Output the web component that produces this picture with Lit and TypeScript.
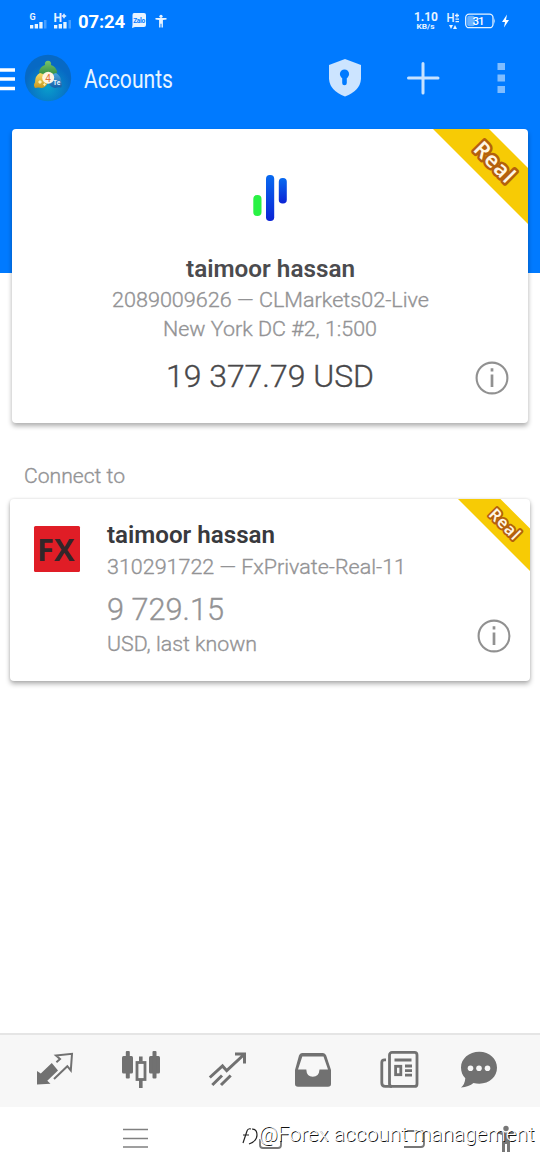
import { LitElement, html, css, svg } from "lit";
import { customElement, property } from "lit/decorators.js";

@customElement("info-icon")
class InfoIcon extends LitElement {
  static styles = css`:host{display:block;width:34px;height:34px}svg{display:block}`;
  render() {
    return html`<svg width="34" height="34" viewBox="0 0 34 34"><circle cx="17" cy="17" r="15.4" fill="none" stroke="#919191" stroke-width="2.1"/><path d="M17 13.5V26M17 7.300V10.500" stroke="#919191" stroke-width="2.700"/></svg>`;
  }
}

@customElement("real-ribbon")
class RealRibbon extends LitElement {
  @property({ type: Number }) size = 95;
  static styles = css`:host{display:block}svg{display:block}text{font-family:"Noto Sans",sans-serif;font-weight:600;font-size:21.5px}`;
  render() {
    return html`<svg width=${this.size} height=${this.size} viewBox="0 0 95 95"><path d="M0 0H56L95 39V95Z" fill="#f7cb05"/><text transform="translate(61.5 33) rotate(45)" x="0" y="7.5" text-anchor="middle" textLength="48" fill="#fff6e4" stroke="#b4600c" stroke-width="5" stroke-linejoin="round" paint-order="stroke">Real</text></svg>`;
  }
}

const fit = (text: string, width: number, size: number, h: number, cls: string, middle = false) => html`
  <svg class="line ${cls}" width=${width} height=${h}><text x=${middle ? width / 2 : 0} y=${Math.round(h * 0.76)} text-anchor=${middle ? "middle" : "start"} font-size=${size} textLength=${width} lengthAdjust="spacingAndGlyphs">${text}</text></svg>`;

const tabs = [
  svg`<path d="M1 20v13.6l13.5-.8-3.2-3L22 19.5 15.8 12 4.8 22.6Z" fill="#717171"/><path d="M18 28 31.3 15.2 34.8 19.5 36 2.8 20 4.5 24 8 20.4 11.2" fill="none" stroke="#717171" stroke-width="2"/>`,
  svg`<g fill="#717171"><rect x="0" y="5" width="11" height="17.5" rx="1.5"/><rect x="3.8" y="0" width="4" height="27.5" rx="1"/><rect x="27" y="5" width="11" height="17.5" rx="1.5"/><rect x="30.5" y="0" width="4" height="27.5" rx="1"/><rect x="17" y="5.5" width="3.6" height="5"/><rect x="17" y="28" width="3.6" height="9"/></g><rect x="15" y="11.5" width="8" height="17" fill="#f7f7f7" stroke="#717171" stroke-width="2.8"/>`,
  svg`<g fill="none" stroke="#717171" stroke-width="3"><path d="M1.800 26.500 14.500 15l4.200 4.700L35.500 4M27 3h9.500v9.500"/><path d="M4.300 34 14 24.500M13 34l9.700-9.500"/></g>`,
  svg`<path fill="#717171" fill-rule="evenodd" d="M8 2H29q2.300 0 3.200 2.500L37 19v14q0 2.700-3 2.700H4q-3 0-3-2.700V19L5 4.500Q5.800 2 8 2ZM8.300 5.500 4 18.500h8.300q.3 7.300 6.500 7.300t6.700-7.300H34L29.500 5.500Z"/>`,
  svg`<g fill="none" stroke="#717171" stroke-width="2.8"><rect x="9.5" y="1.4" width="27.5" height="34" rx="2.5"/><path d="M6 8.800H4.500Q1.800 8.800 1.800 11.500V32q0 3.400 3.400 3.400H12"/><path d="M14.500 9h17M25 15h7M25 19.700h7M25 24.200h7"/><rect x="15.6" y="15.3" width="5.2" height="8.4"/></g>`,
  svg`<g transform="translate(-6)"><path fill="#717171" d="M19.300.7C9 .7 1 7.700 1 16.400c0 4.300 1.500 7.800 4.300 10.800Q5 33 1 36.600q8-.8 12.500-4.700 2.700.8 5.800.8C29.500 32.700 37 25.700 37 16.800 37 7.700 29.500.7 19.300.7Z"/><g fill="#f7f7f7"><circle cx="10.5" cy="17.2" r="2.8"/><circle cx="19" cy="17.2" r="2.8"/><circle cx="27.5" cy="17.2" r="2.8"/></g></g>`,
];

@customElement("app-root")
class AppRoot extends LitElement {
  static styles = css`
    :host{display:block;height:1170px;position:relative;overflow:hidden;background:#fff;font-family:Roboto,sans-serif;box-sizing:border-box}
    *{box-sizing:border-box}
    svg{display:block;overflow:visible;flex:none}
    .page{display:flex;flex-direction:column;height:1170px;background:linear-gradient(#007aff 0 273px,#fff 273px)}
    .status{height:42px;flex:none}
    .bar{height:87px;flex:none}
    .card{background:#fff;border-radius:4px;position:relative;flex:none}
    .main{height:294px;margin:0 12px;padding:46px 0 0;display:flex;flex-direction:column;align-items:center;box-shadow:0 3px 5px rgba(0,0,0,.32)}
    .ribbon{position:absolute;top:0;right:0}
    .info{position:absolute;right:19px;bottom:28px}
    .line text{font-family:Roboto,sans-serif}
    .name{fill:#4b4b4e;font-weight:600}
    .dark{fill:#38393d;font-weight:600}
    .grey{fill:#939395;stroke:#939395;stroke-width:.35px;font-weight:300}
    .amount{fill:#48484a;stroke:#48484a;stroke-width:.35px;font-weight:300}
    .main .name{margin-top:35px}
    .main .name + .grey{margin-top:3px}
    .main .grey + .grey{margin-top:2px}
    .main .amount{margin-top:16px}
    .connect{margin:39px 0 9px 24px}
    .second{height:182px;margin:0 10px;padding:20px 24px;display:flex;gap:27px;box-shadow:0 3px 5px rgba(0,0,0,.3),0 0 3px rgba(0,0,0,.12)}
    .fx{margin-top:7px}
    .details{display:flex;flex-direction:column}
    .details .last{margin-top:-2px}
    .space{flex:1}
    .tabs{height:74px;flex:none;background:#f7f7f7;border-top:2px solid #e5e5e5;display:flex;gap:48px;padding:16px 0 0 36px}
    .nav{height:63px;flex:none;background:#fff}
    .b{font-weight:700}
  `;
  render() {
    return html`<div class="page">
      <svg class="status" width="540" height="42" fill="#e8f4ff" font-family="Roboto">
        <text x="29.500" y="20" font-size="9" class="b">G</text>
        <path d="M30 25h3.300v3.500H30zM34.700 24h3.300v4.500h-3.300zM39.300 22h3.300v6.500h-3.300z"/><path d="M44 20h2.500v8.500H44z" opacity=".3"/>
        <text x="53.500" y="22" font-size="12" class="b">H</text><path d="M61.800 16h4.400M64 13.800v4.400" stroke="#e8f4ff" stroke-width="1.500"/>
        <path d="M54 25h3.300v3.500H54zM58.700 24h3.300v4.500h-3.300zM63.300 22h3.300v6.500h-3.300z"/><path d="M68.500 20h2.500v8.500h-2.500z" opacity=".3"/>
        <text x="78" y="28" font-size="18.500" class="b" fill="#fff" textLength="47">07:24</text>
        <path d="M134 13h10q2 0 2 2v10q0 2-2 2h-9l-3 1 .5-3V15q0-2 1.500-2Z"/><text x="133.200" y="23" font-size="6.500" class="b" fill="#007aff" textLength="12">Zalo</text>
        <circle cx="161" cy="16.300" r="1.600"/><path d="M155.500 18h11v1.500l-3.600.6V27.500h-1.400V23.700h-1V27.500h-1.400V20.100l-3.600-.6Z"/>
        <text x="414" y="21" font-size="12" class="b" textLength="24">1.10</text>
        <text x="416.500" y="29" font-size="7.500" class="b" textLength="18" lengthAdjust="spacingAndGlyphs">KB/s</text>
        <text x="446.500" y="22.200" font-size="13" font-weight="500" textLength="8" lengthAdjust="spacingAndGlyphs">H</text>
        <path d="M455 15.500h4M457 13.500v4M455.500 19.200h3.500M455.500 21.700h3.500" stroke="#e8f4ff" stroke-width="1.300"/>
        <path d="M449 25h4l-2 4zM453 29h4l-2-4z"/>
        <rect x="465.700" y="14.200" width="27.300" height="13.500" rx="3.500" fill="none" stroke="#e8f4ff" stroke-width="1.300"/><rect x="467.200" y="15.700" width="7.500" height="10.500" rx="2" opacity=".45"/><path d="M494 18q1.500 3 0 6z"/>
        <text x="472.500" y="25" font-size="11.500" font-weight="500" fill="#fff" textLength="12">31</text>
        <path d="M507 14.500 502 22h3l-1 5.500 5-7.500h-3Z" fill="#fff"/>
      </svg>
      <svg class="bar" width="540" height="87" viewBox="0 42 540 87">
        <defs>
          <radialGradient id="g" cy=".7"><stop stop-color="#0a9fcb"/><stop offset="1" stop-color="#0769c4"/></radialGradient>
          <linearGradient id="gg" x2="0" y2="1"><stop stop-color="#78c46a"/><stop offset="1" stop-color="#1f7f3a"/></linearGradient>
          <linearGradient id="gy" x2="0" y2="1"><stop stop-color="#f4dc6a"/><stop offset="1" stop-color="#c9981f"/></linearGradient>
          <linearGradient id="gb" x2="0" y2="1"><stop stop-color="#4ea6dc"/><stop offset="1" stop-color="#145fa8"/></linearGradient>
        </defs>
        <path d="M0 70H15M0 79H15M0 88.500H15" stroke="#fff" stroke-width="3.400"/>
        <circle cx="48" cy="78" r="23.200" fill="url(#g)"/>
        <path d="M45 65a3.200 3.200 0 1 1 6 0q5 1.500 6 7-1 7-9 7-8 0-9-7 1-5.500 6-7Z" fill="url(#gg)"/>
        <path d="M40 73q5 1 8 6 0 8-6 9-4-1-7 0-2-3 0-5.500 0-7 5-9.500Z" fill="url(#gy)"/>
        <path d="M56 73q5 3 5.500 9 1.500 3-.5 5.500-3-.5-6 .5-7-1-7-9 3-5 8-6Z" fill="url(#gb)"/>
        <circle cx="48.200" cy="77.800" r="6" fill="#fff4e2"/>
        <text x="48.100" y="81.500" font-size="10" text-anchor="middle" font-family="Roboto" fill="#e2713b">4</text>
        <text x="53" y="85" font-size="6.500" font-family="Roboto" class="b" fill="#e4f4ff">Te</text><path d="M38 82l2-2 2 2-2 2zM43 84.500l1.500-1.500 1.500 1.500-1.500 1.500z" fill="#fff3b0"/>
        <text x="84" y="88" font-size="25" font-family="Roboto" fill="#e8f4ff" textLength="89" lengthAdjust="spacingAndGlyphs">Accounts</text>
        <path d="M345 59 361 65V79Q360 91 345 96.500 330 91 329 79V65Z" fill="#cce4ff"/><circle cx="344.500" cy="74" r="4.600" fill="#007aff"/><path d="M344.500 75v8" stroke="#007aff" stroke-width="4.600" stroke-linecap="round"/>
        <path d="M408.500 78H438M423 63.500V93" stroke="#c7e2ff" stroke-width="3" stroke-linecap="round"/>
        <path d="M497.500 63h7.500v7h-7.500zM497.500 74.500h7.500v7h-7.500zM497.500 86h7.500v7h-7.500z" fill="#80bdff"/>
      </svg>
      <section class="card main">
        <svg width="40" height="46" viewBox="250 175 40 46"><defs><linearGradient id="bl" x2="0" y2="1"><stop stop-color="#086af0"/><stop offset="1" stop-color="#0b23d5"/></linearGradient></defs><rect x="253.300" y="195" width="8.200" height="21" rx="4" fill="#29f244"/><rect x="266" y="175" width="8.200" height="46" rx="3.800" fill="url(#bl)"/><rect x="278.800" y="178" width="8" height="25.500" rx="3.800" fill="url(#bl)"/></svg>
        ${fit("taimoor hassan", 169, 23.4, 27, "name", true)}
        ${fit("2089009626 — CLMarkets02-Live", 317, 21, 27, "grey", true)}
        ${fit("New York DC #2, 1:500", 214, 21, 27, "grey", true)}
        ${fit("19 377.79 USD", 208, 31.5, 38, "amount", true)}
        <real-ribbon class="ribbon" .size=${95}></real-ribbon><info-icon class="info"></info-icon>
      </section>
      <div class="connect">${fit("Connect to", 101, 21, 28, "grey")}</div>
      <section class="card second">
        <svg class="fx" width="46" height="46"><rect width="46" height="46" rx="1.500" fill="#e01d26"/><text x="3" y="34.500" font-family="Open Sans" font-size="31" class="b" fill="#322629" textLength="37.500" lengthAdjust="spacingAndGlyphs">FX</text></svg>
        <div class="details">
          ${fit("taimoor hassan", 168, 23.4, 31, "dark")}
          ${fit("310291722 — FxPrivate-Real-11", 299, 21, 32, "grey")}
          ${fit("9 729.15", 117, 31.5, 50, "grey")}
          ${fit("USD, last known", 150, 21, 27, "grey last")}
        </div>
        <real-ribbon class="ribbon" .size=${72}></real-ribbon><info-icon class="info"></info-icon>
      </section>
      <div class="space"></div>
      <nav class="tabs">${tabs.map((t) => html`<svg width="38" height="38">${t}</svg>`)}</nav>
      <svg class="nav" width="540" height="63" viewBox="0 1107 540 63">
        <path d="M123 1129.500H148M123 1138.500H148M123 1147H148" stroke="#808080" stroke-width="1.700"/>
        <g fill="none" stroke="#777" stroke-width="1.800"><path d="M260 1139v6q0 3 3 3h15q3 0 3-3v-12"/><path d="M404 1131h17q3 0 3 3v10q0 3-3 3h-17"/></g>
        <g fill="#777"><circle cx="506" cy="1128.500" r="2.700"/><path d="M498 1131.500l5 1h6l5-1v2l-4 1.500v17h-3v-8h-2v8h-3v-17l-4-1.500z"/></g>
        <g font-family="Roboto" font-size="20.500" font-weight="300"><text x="259.500" y="1141.500" fill="#111" textLength="276" lengthAdjust="spacingAndGlyphs">@Forex account management</text><text x="258.700" y="1140.700" fill="#fff" textLength="276" lengthAdjust="spacingAndGlyphs">@Forex account management</text></g>
        <path d="M243 1143l4-12q1-3 4-2M243 1135h6M252 1129q5 0 5 6t-8 9" fill="none" stroke="#222" stroke-width="1.200"/>
      </svg>
    </div>`;
  }
}
